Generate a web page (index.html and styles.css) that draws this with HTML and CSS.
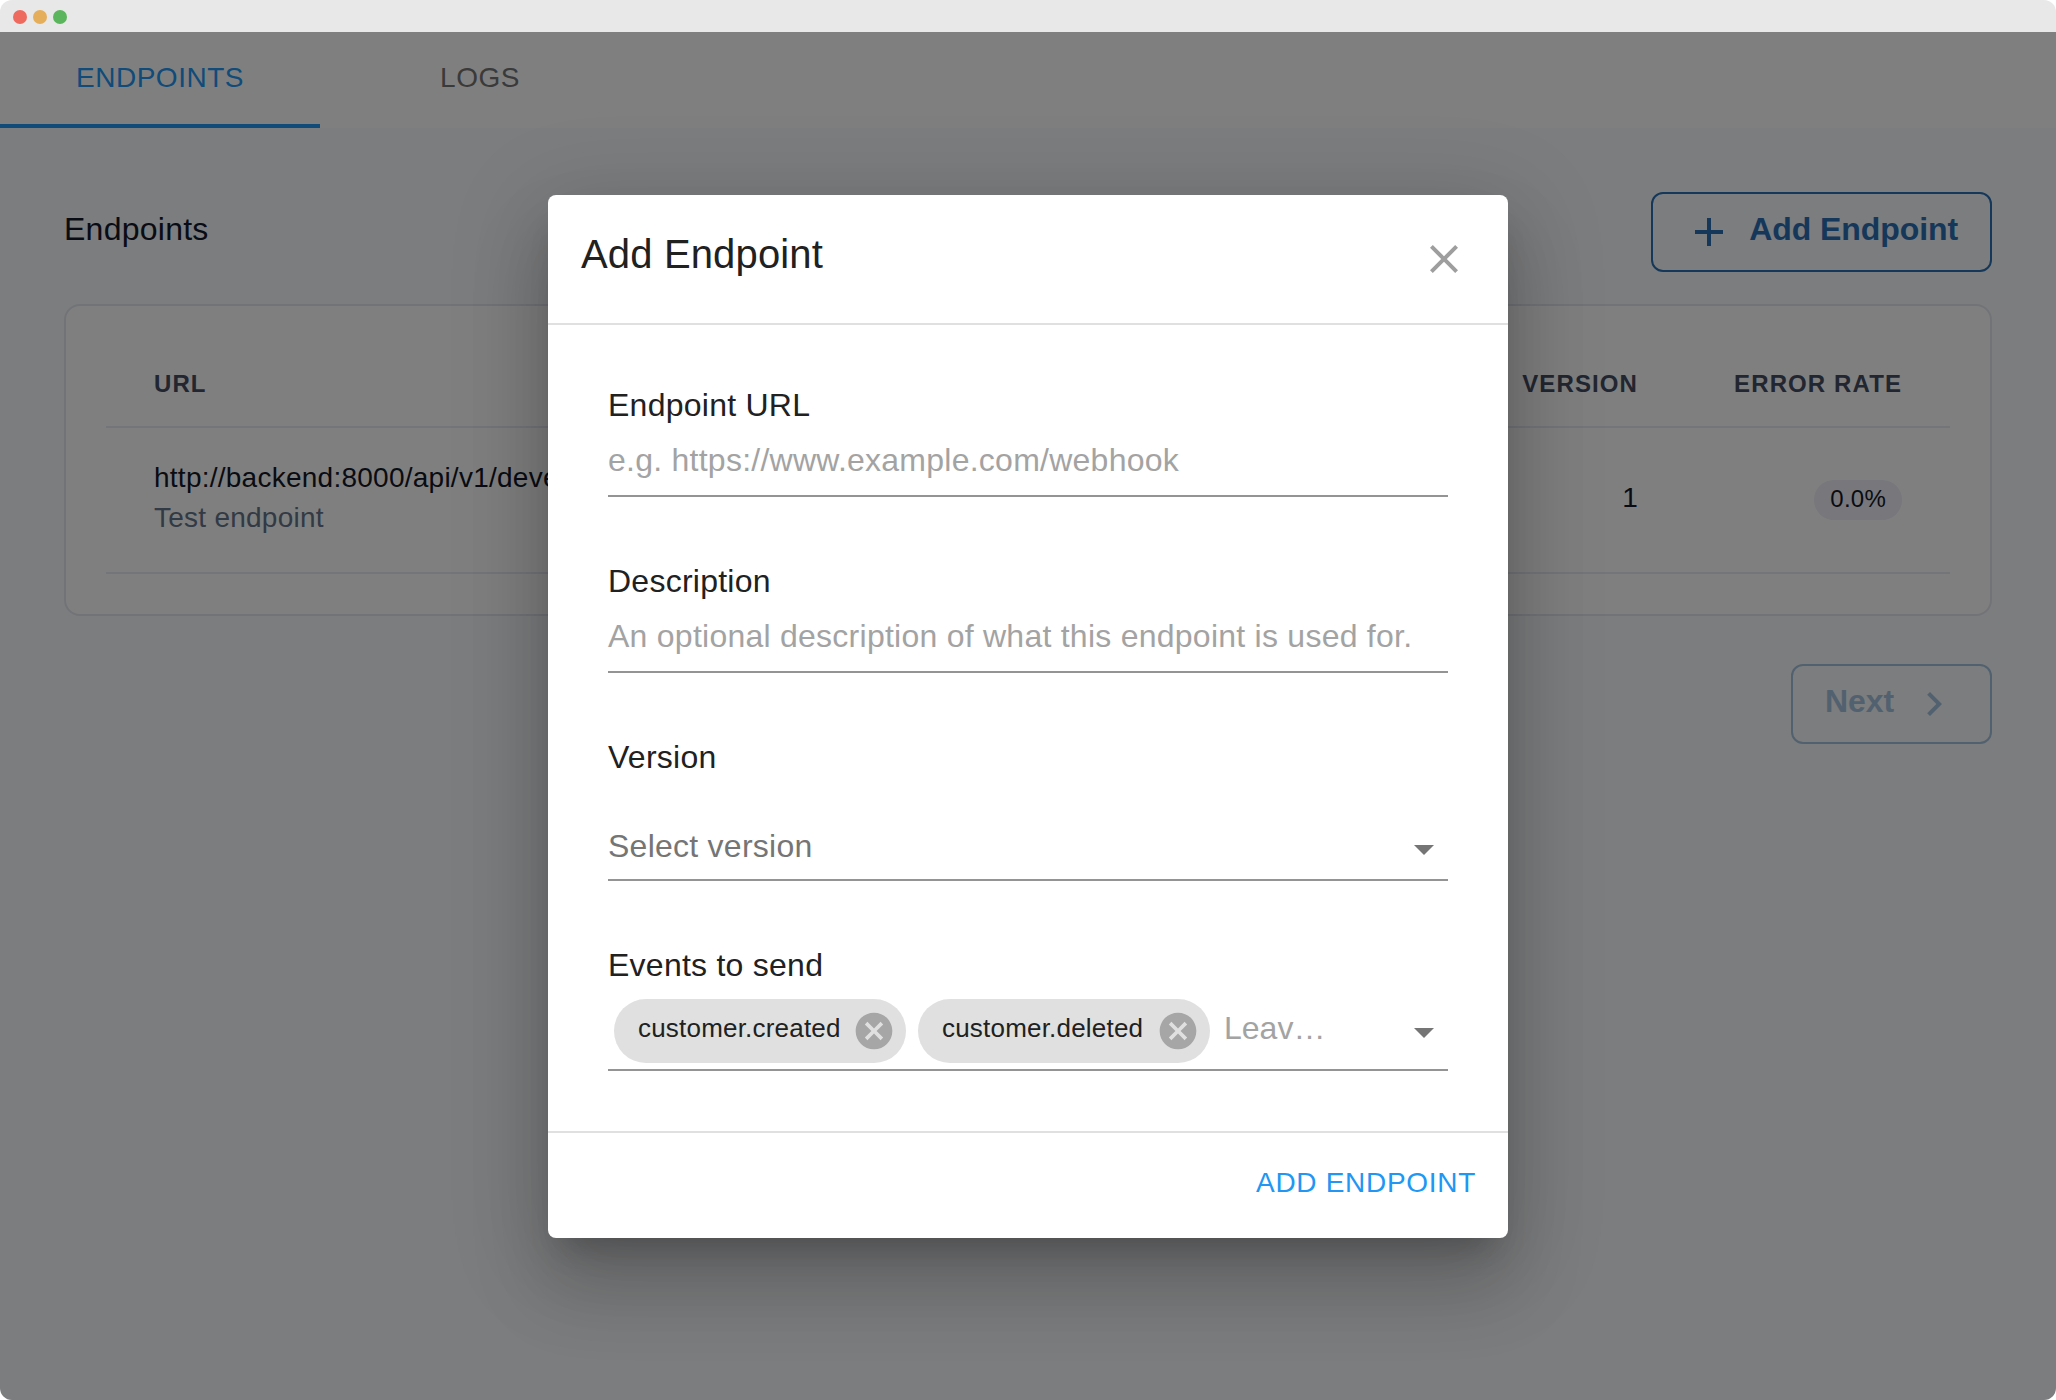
FILE: index.html
```html
<!DOCTYPE html>
<html lang="en">
<head>
<meta charset="utf-8">
<title>Endpoints</title>
<link rel="stylesheet" href="styles.css">
</head>
<body>
<div class="window">
  <div class="titlebar">
    <span class="dot dot-red"></span>
    <span class="dot dot-amber"></span>
    <span class="dot dot-green"></span>
  </div>
  <div class="app">
    <nav class="tabs">
      <div class="tab tab-active">ENDPOINTS</div>
      <div class="tab">LOGS</div>
    </nav>
    <main class="page">
      <div class="page-head">
        <h1 class="page-title">Endpoints</h1>
        <div class="btn">
          <svg class="icon" viewBox="0 0 24 24"><path d="M19 13h-6v6h-2v-6H5v-2h6V5h2v6h6v2z"/></svg>
          <span class="btn-label">Add Endpoint</span>
        </div>
      </div>
      <section class="card">
        <div class="row row-head">
          <div class="cell">URL</div>
          <div class="cell cell-right">VERSION</div>
          <div class="cell cell-right">ERROR RATE</div>
        </div>
        <div class="row row-body">
          <div class="cell cell-text">
            <div class="url">http://backend:8000/api/v1/developer</div>
            <div class="note">Test endpoint</div>
          </div>
          <div class="cell cell-right cell-text">1</div>
          <div class="cell cell-right"><span class="badge">0.0%</span></div>
        </div>
      </section>
      <div class="pager">
        <div class="btn btn-disabled">
          <span class="btn-label">Next</span>
          <svg class="icon" viewBox="0 0 24 24"><path d="M10 6L8.59 7.41 13.17 12l-4.58 4.59L10 18l6-6z"/></svg>
        </div>
      </div>
    </main>
    <div class="backdrop">
      <div class="dialog">
        <header class="dialog-head">
          <h2 class="dialog-title">Add Endpoint</h2>
          <svg class="icon close" viewBox="0 0 24 24"><path d="M19 6.41L17.59 5 12 10.59 6.41 5 5 6.41 10.59 12 5 17.59 6.41 19 12 13.41 17.59 19 19 17.59 13.41 12z"/></svg>
        </header>
        <div class="dialog-body">
          <div class="field">
            <div class="label">Endpoint URL</div>
            <div class="input">e.g. https://www.example.com/webhook</div>
          </div>
          <div class="field">
            <div class="label">Description</div>
            <div class="input">An optional description of what this endpoint is used for.</div>
          </div>
          <div class="field">
            <div class="label">Version</div>
            <div class="select">
              <span class="select-text">Select version</span>
              <svg class="icon arrow" viewBox="0 0 24 24"><path d="M7 10l5 5 5-5z"/></svg>
            </div>
          </div>
          <div class="field">
            <div class="label">Events to send</div>
            <div class="chips">
              <div class="chip">
                <span class="chip-label">customer.created</span>
                <svg class="chip-icon" viewBox="0 0 24 24"><path d="M12 2C6.47 2 2 6.47 2 12s4.47 10 10 10 10-4.47 10-10S17.53 2 12 2zm5 13.59L15.59 17 12 13.41 8.41 17 7 15.59 10.59 12 7 8.41 8.41 7 12 10.59 15.59 7 17 8.41 13.41 12 17 15.59z"/></svg>
              </div>
              <div class="chip">
                <span class="chip-label">customer.deleted</span>
                <svg class="chip-icon" viewBox="0 0 24 24"><path d="M12 2C6.47 2 2 6.47 2 12s4.47 10 10 10 10-4.47 10-10S17.53 2 12 2zm5 13.59L15.59 17 12 13.41 8.41 17 7 15.59 10.59 12 7 8.41 8.41 7 12 10.59 15.59 7 17 8.41 13.41 12 17 15.59z"/></svg>
              </div>
              <span class="chips-hint">Leav…</span>
              <svg class="icon arrow arrow-chips" viewBox="0 0 24 24"><path d="M7 10l5 5 5-5z"/></svg>
            </div>
          </div>
        </div>
        <footer class="dialog-foot">
          <div class="action">ADD ENDPOINT</div>
        </footer>
      </div>
    </div>
  </div>
</div>
</body>
</html>
```
FILE: styles.css
```css
* { box-sizing: border-box; }

body {
  margin: 0;
  background: #fff;
  font-family: "Liberation Sans", Arial, sans-serif;
  font-size: 32px;
  letter-spacing: 0.25px;
  color: #212121;
}

.window {
  width: 2056px;
  height: 1400px;
  display: flex;
  flex-direction: column;
  border-radius: 12px;
  overflow: hidden;
}

.titlebar {
  flex: none;
  height: 32px;
  padding: 2px 0 0 13px;
  display: flex;
  align-items: center;
  gap: 6px;
  background: #e8e8e8;
}
.dot { width: 14px; height: 14px; border-radius: 50%; }
.dot-red { background: #ee6a5f; }
.dot-amber { background: #e5ae5a; }
.dot-green { background: #5bb55c; }

.app {
  position: relative;
  flex: 1;
  background: #f9fafc;
  color: #121828;
}

.tabs {
  display: flex;
  height: 96px;
  background: #fff;
}
.tab {
  width: 320px;
  padding-bottom: 5px;
  display: flex;
  align-items: center;
  justify-content: center;
  font-size: 28px;
  letter-spacing: 0.5px;
  color: #757575;
}
.tab-active {
  padding-bottom: 1px;
  border-bottom: 4px solid #2196f3;
  color: #2196f3;
}

.page { padding: 64px 64px 0; }
.page-head {
  height: 80px;
  display: flex;
  align-items: center;
  justify-content: space-between;
}
.page-title {
  margin: 0;
  padding-bottom: 6px;
  font-size: 32px;
  font-weight: 400;
}

.icon {
  flex: none;
  width: 48px;
  height: 48px;
  fill: currentColor;
}

.btn {
  height: 80px;
  padding: 0 32px;
  display: flex;
  align-items: center;
  gap: 16px;
  border: 2px solid #2a6fb5;
  border-radius: 12px;
  color: #2a6fb5;
  font-weight: 700;
  letter-spacing: -0.08px;
}
.btn-label { padding-bottom: 6px; }
.btn-disabled { opacity: 0.4; }

.card {
  margin-top: 32px;
  padding: 40px;
  background: #fff;
  border: 2px solid #e3e7ee;
  border-radius: 16px;
}
.row {
  display: grid;
  grid-template-columns: 1fr 240px 264px;
  align-items: center;
  border-bottom: 2px solid #e9eaf2;
}
.row-head {
  height: 82px;
  padding-bottom: 5px;
  font-size: 24px;
  font-weight: 700;
  letter-spacing: 1.1px;
  color: #454d60;
}
.row-body { height: 146px; }
.cell { padding: 0 48px; }
.cell-right { display: flex; justify-content: flex-end; }
.cell-text {
  padding-bottom: 4px;
  font-size: 28px;
  line-height: 40px;
}
.note { color: #65748b; }
.badge {
  height: 40px;
  padding: 0 16px 3px;
  display: flex;
  align-items: center;
  border-radius: 20px;
  background: #eeeff8;
  font-size: 24px;
}

.pager {
  margin-top: 48px;
  display: flex;
  justify-content: flex-end;
}

.backdrop {
  position: absolute;
  inset: 0;
  padding-top: 1px;
  display: flex;
  align-items: center;
  justify-content: center;
  background: rgba(0, 0, 0, 0.5);
  color: #212121;
}

.dialog {
  width: 960px;
  background: #fff;
  border-radius: 8px;
  box-shadow:
    0 22px 30px -14px rgba(0, 0, 0, 0.2),
    0 48px 76px 6px rgba(0, 0, 0, 0.14),
    0 18px 92px 16px rgba(0, 0, 0, 0.12);
}
.dialog-head {
  height: 128px;
  padding: 0 40px 0 32px;
  display: flex;
  align-items: center;
  justify-content: space-between;
}
.dialog-title {
  margin: 0;
  padding: 0 0 9px 1px;
  font-size: 40px;
  font-weight: 400;
  letter-spacing: 0.15px;
}
.close { color: #9e9e9e; }

.dialog-body {
  padding: 57px 60px 60px;
  display: flex;
  flex-direction: column;
  gap: 61px;
  border-top: 2px solid #e0e0e0;
  border-bottom: 2px solid #e0e0e0;
}
.label { line-height: 46px; }
.input,
.select,
.chips { border-bottom: 2px solid #949494; }
.input {
  height: 69px;
  line-height: 64px;
  color: #a3a3a3;
}
.select {
  height: 62px;
  margin-top: 39px;
  display: flex;
  align-items: center;
  justify-content: space-between;
}
.select-text {
  padding-bottom: 5px;
  color: #757575;
}
.arrow { color: #757575; }

.chips {
  padding: 11px 0 6px 6px;
  display: flex;
  align-items: center;
  gap: 12px;
}
.chip {
  width: 292px;
  height: 64px;
  padding: 0 10px 0 24px;
  display: flex;
  align-items: center;
  justify-content: space-between;
  border-radius: 32px;
  background: #e0e0e0;
}
.chip-label {
  padding-bottom: 6px;
  font-size: 26px;
  letter-spacing: 0.2px;
}
.chip-icon {
  width: 44px;
  height: 44px;
  fill: #a6a6a6;
}
.chips-hint {
  padding: 0 0 6px 2px;
  letter-spacing: 0;
  color: #a3a3a3;
}
.arrow-chips { margin: 2px 0 0 auto; }

.dialog-foot {
  height: 105px;
  padding: 0 32px 5px;
  display: flex;
  align-items: center;
  justify-content: flex-end;
}
.action {
  font-size: 28px;
  letter-spacing: 0.7px;
  color: #2196f3;
}
```
